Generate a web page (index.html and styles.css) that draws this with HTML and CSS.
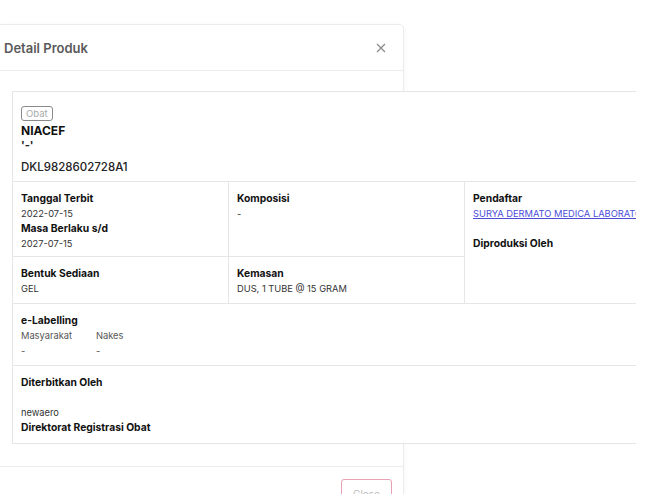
FILE: index.html
```html
<!DOCTYPE html>
<html>
<head>
<meta charset="utf-8">
<link rel="stylesheet" href="styles.css">
</head>
<body>
<div class="modal">
  <div class="modal-header">
    <span class="title">Detail Produk</span>
    <svg class="x" width="10" height="10" viewBox="0 0 10 10"><path d="M1 1L9 9M9 1L1 9" stroke="#888" stroke-width="1.2" fill="none"/></svg>
  </div>
  <div class="modal-body">
    <div class="card-clip">
      <div class="card">
        <div class="head">
          <span class="badge">Obat</span>
          <div class="name">NIACEF</div>
          <div class="sub">'-'</div>
          <div class="reg">DKL9828602728A1</div>
        </div>
        <div class="grid">
          <div class="cell c1">
            <div class="lbl">Tanggal Terbit</div>
            <div class="val">2022-07-15</div>
            <div class="lbl">Masa Berlaku s/d</div>
            <div class="val">2027-07-15</div>
          </div>
          <div class="cell c2">
            <div class="lbl">Komposisi</div>
            <div class="val">-</div>
          </div>
          <div class="cell c3">
            <div class="lbl">Pendaftar</div>
            <div class="val"><a class="link">SURYA DERMATO MEDICA LABORATORIES</a></div>
            <div class="val">&nbsp;</div>
            <div class="lbl">Diproduksi Oleh</div>
          </div>
          <div class="cell c4">
            <div class="lbl">Bentuk Sediaan</div>
            <div class="val">GEL</div>
          </div>
          <div class="cell c5">
            <div class="lbl">Kemasan</div>
            <div class="val">DUS, 1 TUBE @ 15 GRAM</div>
          </div>
          <div class="cell full">
            <div class="lbl">e-Labelling</div>
            <div class="pair">
              <div><div class="val">Masyarakat</div><div class="val">-</div></div>
              <div><div class="val">Nakes</div><div class="val">-</div></div>
            </div>
          </div>
          <div class="cell full last">
            <div class="lbl">Diterbitkan Oleh</div>
            <div class="val">&nbsp;</div>
            <div class="val">newaero</div>
            <div class="lbl">Direktorat Registrasi Obat</div>
          </div>
        </div>
      </div>
    </div>
  </div>
  <div class="modal-footer">
    <button class="btn">Close</button>
  </div>
</div>
</body>
</html>
```
FILE: styles.css
```css
html, body {
  margin: 0;
  padding: 0;
  background: #fff;
  font-family: Inter, "Open Sans", sans-serif;
  color: #222;
  overflow: hidden;
}
.modal {
  margin-top: 24px;
  width: 403px;
  border: 1px solid #ececec;
  border-left: none;
  border-radius: 0 5px 0 0;
  background: #fff;
  box-shadow: 1px 0 4px rgba(0,0,0,0.03);
}
.modal-header {
  height: 45px;
  display: flex;
  align-items: center;
  justify-content: space-between;
  padding: 0 17px 0 4px;
  border-bottom: 1px solid #ececec;
}
.title {
  font-size: 13px;
  font-weight: 600;
  color: #5a5a5a;
}
.modal-body {
  padding: 20px 0 22px 12px;
}
.card-clip {
  width: 623px;
  overflow: hidden;
  position: relative;
  z-index: 1;
  background: #fff;
  border-top: 1px solid #e6e6e6;
  border-left: 1px solid #e6e6e6;
  border-bottom: 1px solid #e6e6e6;
}
.card {
  width: 720px;
}
.head {
  height: 89px;
  padding: 9px 0 0 8px;
  box-sizing: border-box;
}
.badge {
  display: inline-block;
  border: 1px solid #8a8a8a;
  border-radius: 3px;
  font-size: 9.5px;
  color: #aaa;
  line-height: 13px;
  padding: 0 4px;
}
.name {
  margin-top: 2px;
  font-size: 12px;
  font-weight: 700;
  line-height: 15px;
  color: #111;
}
.sub {
  font-size: 11px;
  font-weight: 700;
  line-height: 15px;
  color: #222;
}
.reg {
  margin-top: 6px;
  font-size: 11.5px;
  font-weight: 500;
  line-height: 16px;
  color: #222;
}
.grid {
  display: grid;
  grid-template-columns: 216px 236px 1fr;
  border-top: 1px solid #e6e6e6;
}
.cell {
  padding: 9px 8px 0 8px;
  border-right: 1px solid #e6e6e6;
  border-bottom: 1px solid #e6e6e6;
}
.c1 { height: 75px; box-sizing: border-box; }
.c3 { grid-row: span 2; }
.c4, .c5 { height: 47px; box-sizing: border-box; }
.full {
  grid-column: 1 / -1;
  height: 62px;
  box-sizing: border-box;
  border-right: none;
}
.last {
  height: 77px;
  border-bottom: none;
}
.lbl {
  font-size: 10.3px;
  font-weight: 700;
  line-height: 15px;
  color: #111;
  white-space: nowrap;
}
.val {
  font-size: 9.3px;
  line-height: 15px;
  color: #333;
  white-space: nowrap;
}
.link {
  color: #4c4cd8;
  text-decoration: underline;
}
.pair {
  display: flex;
  gap: 16px;
}
.pair > div:first-child { width: 59px; }
.pair .val { color: #555; }
.modal-footer {
  border-top: 1px solid #ececec;
  padding: 12px 11px 0 0;
  height: 40px;
  display: flex;
  justify-content: flex-end;
}
.btn {
  width: 51px;
  height: 30px;
  border: 1px solid #e7a3b4;
  border-radius: 3px;
  background: #fff;
  color: #bbb;
  font-family: Inter, sans-serif;
  font-size: 10px;
}
```
